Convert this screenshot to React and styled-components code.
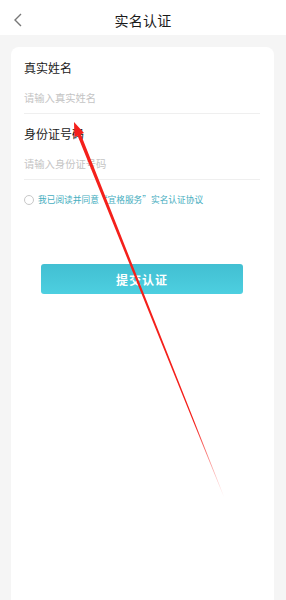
import React from "react";
import styled, { createGlobalStyle } from "styled-components";

const Global = createGlobalStyle`
  html, body { margin: 0; padding: 0; background: #f5f5f5; }
  body { font-family: "Noto Sans CJK SC", "Noto Sans", sans-serif; }
  * { box-sizing: border-box; }
`;

const Page = styled.div`
  position: relative;
  width: 286px;
  height: 600px;
  background: #f5f5f5;
  display: flex;
  flex-direction: column;
  overflow: hidden;
`;

const Header = styled.header`
  height: 35px;
  flex: none;
  background: #fff;
  display: flex;
  align-items: center;
  justify-content: center;
  position: relative;
`;

const Back = styled.button`
  position: absolute;
  left: 10px;
  top: 9px;
  width: 16px;
  height: 22px;
  border: 0;
  background: none;
  padding: 0;
  display: flex;
  align-items: center;
  justify-content: center;
`;

const Title = styled.h1`
  margin: 0;
  font-size: 14px;
  font-weight: 400;
  color: #1a1a1a;
  letter-spacing: 0.3px;
  line-height: 1;
  margin-top: 5px;
`;

const Body = styled.main`
  flex: 1;
  padding: 12px 12px 0 11px;
  display: flex;
`;

const Card = styled.section`
  flex: 1;
  background: #fff;
  border-radius: 8px 8px 0 0;
  padding: 10px 14px 0 13px;
  display: flex;
  flex-direction: column;
`;

const Field = styled.div`
  display: flex;
  flex-direction: column;
  border-bottom: 1px solid #efefef;
  padding-bottom: 7px;
  margin-bottom: 9px;
`;

const Label = styled.label`
  font-size: 12px;
  color: #1a1a1a;
  line-height: 22px;
  font-weight: 400;
`;

const Input = styled.div`
  font-size: 10.3px;
  color: #c4c4c4;
  line-height: 16px;
  margin-top: 11px;
`;

const Agree = styled.div`
  display: flex;
  align-items: center;
  gap: 4px;
  margin-top: 5px;
`;

const Radio = styled.span`
  width: 10px;
  height: 10px;
  border-radius: 50%;
  border: 1px solid #c8c8c8;
  flex: none;
`;

const AgreeText = styled.span`
  font-size: 8.7px;
  color: #46aec0;
  line-height: 12px;
  white-space: nowrap;
`;

const Submit = styled.button`
  align-self: center;
  margin-top: 58px;
  width: 202px;
  height: 30px;
  border: 0;
  border-radius: 3px;
  background: linear-gradient(180deg, #42bfd2 0%, #4dcfe0 100%);
  color: #fff;
  font-family: "Noto Sans CJK SC", sans-serif;
  font-size: 12px;
  font-weight: 700;
  letter-spacing: 1px;
`;

const Overlay = styled.svg`
  position: absolute;
  left: 0;
  top: 0;
  pointer-events: none;
`;

export default function App() {
  return (
    <Page>
      <Global />
      <Header>
        <Back aria-label="back">
          <svg width="10" height="14" viewBox="0 0 10 14">
            <path d="M8 1 L2 7 L8 13" fill="none" stroke="#777" strokeWidth="1.4" />
          </svg>
        </Back>
        <Title>实名认证</Title>
      </Header>
      <Body>
        <Card>
          <Field>
            <Label>真实姓名</Label>
            <Input>请输入真实姓名</Input>
          </Field>
          <Field>
            <Label>身份证号码</Label>
            <Input>请输入身份证号码</Input>
          </Field>
          <Agree>
            <Radio />
            <AgreeText>我已阅读并同意“宜格服务”实名认证协议</AgreeText>
          </Agree>
          <Submit>提交认证</Submit>
        </Card>
      </Body>
      <Overlay width="286" height="600" viewBox="0 0 286 600">
        <defs>
          <linearGradient id="fade" gradientUnits="userSpaceOnUse" x1="74" y1="122" x2="224" y2="497">
            <stop offset="0" stopColor="#f4201b" stopOpacity="1" />
            <stop offset="0.8" stopColor="#f4201b" stopOpacity="1" />
            <stop offset="1" stopColor="#f4201b" stopOpacity="0" />
          </linearGradient>
        </defs>
        <polygon
          points="74,122 84,133 80.8,134.3 224.3,497 223.7,497 77.6,135.7 74.4,137"
          fill="url(#fade)"
        />
      </Overlay>
    </Page>
  );
}
